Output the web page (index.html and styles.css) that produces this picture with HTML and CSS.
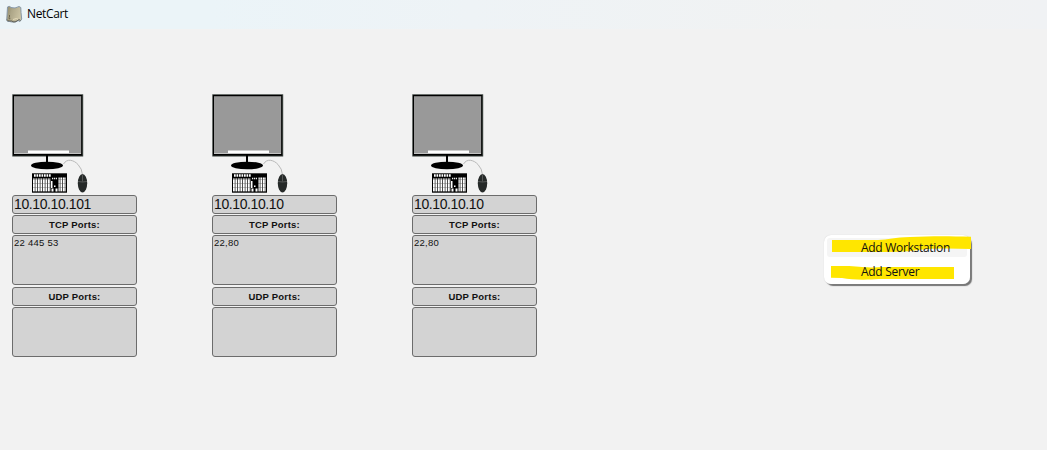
FILE: index.html
```html
<!DOCTYPE html>
<html lang="en">
<head>
<meta charset="utf-8">
<title>NetCart</title>
<link rel="stylesheet" href="styles.css">
</head>
<body>
<svg class="defs" width="0" height="0" aria-hidden="true">
  <defs>
    <linearGradient id="parchment" x1="0" x2="1" y1="0" y2=".3"><stop offset="0" stop-color="#8f896a"/><stop offset=".4" stop-color="#aea789"/><stop offset="1" stop-color="#cbc3a3"/></linearGradient>
    <pattern id="keys" x="33" y="180" width="2.5" height="4" patternUnits="userSpaceOnUse"><rect width="2.5" height="4" fill="#333"/><rect width="1.7" height="4" fill="#fff"/><rect y="3.3" width="1.7" height=".7" fill="#aaa"/></pattern>
    <symbol id="computer" viewBox="12 93 125 102">
      <rect x="12.3" y="94.3" width="70.9" height="62.2" fill="#333a36"/>
      <rect x="13" y="95" width="69" height="60.5" fill="#000"/>
      <rect x="14" y="96" width="67.2" height="58" fill="#777"/>
      <rect x="14" y="97" width="67" height="56" fill="#999"/>
      <rect x="14" y="153" width="67" height="1" fill="#c4c4c4"/>
      <rect x="28" y="150.5" width="41" height="2.5" fill="#fff"/>
      <rect x="46" y="155" width="2" height="9" fill="#000"/>
      <ellipse cx="47" cy="165.5" rx="16" ry="3.8" fill="#000"/>
      <path d="M63.5 164C67 158 74 160 78 164.5Q82 168.5 82.6 175" fill="none" stroke="#b9b9b9" stroke-width="1"/>
      <rect x="32" y="173.3" width="35" height="19.4" fill="#000"/>
      <path d="M34 175.5h17" stroke="#fff" stroke-width="2.3" stroke-dasharray="1.7 .8"/>
      <rect x="33" y="178.5" width="17.5" height="13" fill="url(#keys)"/>
      <rect x="58.5" y="177.5" width="7.5" height="14" fill="url(#keys)"/>
      <path d="M52 178.5h5" stroke="#eee" stroke-dasharray="1.2 .7" stroke-width="1.5"/>
      <path d="M51.5 188.5h2v3h-2zM55.5 188.500H57.500v3H55.500zM54 185.500h1.500v1.500H54zM51 181h1.500v7H51z" fill="#fff"/>
      <ellipse cx="82.5" cy="183.3" rx="4.7" ry="9.2" fill="#262a29"/>
      <path d="M78 181.5q4.5 1 9 0M82.5 174.5v7" fill="none" stroke="#777" stroke-width=".6"/>
    </symbol>
  </defs>
</svg>

<header class="titlebar">
  <svg class="app-icon" width="18" height="18" viewBox="5 4 18 18">
    <path d="M7.500 6q2-1.500 3.500 .5 4 1.500 8-1l1.800 1 .2 5 .7 6.500-1.700 2.500-2-1-2.500 1.500q-3 .5-6-.5-2 .5-2.800-1z" fill="url(#parchment)" stroke="#8798a8" stroke-width="1"/>
    <path d="M7 18.500q1 2 3 1.500t3 .8q2 .5 4-.8l2-1.500 1.500 1" fill="none" stroke="#5b5a50" stroke-width=".9"/>
    <path d="M8.500 17q2-1 1.200 1.300M9.500 14v2" fill="none" stroke="#666047" stroke-width=".9"/>
    <path d="M13 18.500l3.500-1 1.500.8" fill="none" stroke="#e5dbba"/>
  </svg>
  <h1 class="title">NetCart</h1>
</header>

<main class="network">
  <section class="node">
    <svg class="computer"><use href="#computer"/></svg>
    <div class="box address">10.10.10.101</div>
    <div class="box label">TCP Ports:</div>
    <div class="box ports">22 445 53</div>
    <div class="box label">UDP Ports:</div>
    <div class="box ports"></div>
  </section>
  <section class="node">
    <svg class="computer"><use href="#computer"/></svg>
    <div class="box address">10.10.10.10</div>
    <div class="box label">TCP Ports:</div>
    <div class="box ports">22,80</div>
    <div class="box label">UDP Ports:</div>
    <div class="box ports"></div>
  </section>
  <section class="node">
    <svg class="computer"><use href="#computer"/></svg>
    <div class="box address">10.10.10.10</div>
    <div class="box label">TCP Ports:</div>
    <div class="box ports">22,80</div>
    <div class="box label">UDP Ports:</div>
    <div class="box ports"></div>
  </section>
</main>

<nav class="menu">
  <svg class="highlight" width="150" height="54" viewBox="823 233 150 54">
    <path d="M832 240h46c10 0 17-3 32-3 20-1 38-1 61-.3V249c-18-.5-36-1-53 1-12 2-25 2-40 2H832z" fill="#ffe600"/>
    <path d="M831 266h18c14 1 22 2 34 1h71v12H879c-12 1-27 1-37-1l-11-.3z" fill="#ffe600"/>
  </svg>
  <div class="menu-item active"><span class="menu-text workstation">Add Workstation</span></div>
  <div class="menu-item"><span class="menu-text server">Add Server</span></div>
</nav>
</body>
</html>
```

FILE: styles.css
```css
* { box-sizing: border-box; }

body {
  margin: 0;
  width: 1047px;
  height: 450px;
  overflow: hidden;
  background: #f2f2f2;
  font-family: "Liberation Sans", Arial, sans-serif;
  color: #111;
}

.defs { position: absolute; }

.titlebar {
  display: flex;
  align-items: center;
  height: 29px;
  padding: 0 5px 2px;
  gap: 4px;
  background: linear-gradient(90deg, #ebf4f8 0%, #ebf4f8 20%, #eef3f6 45%, #f1f2f2 80%, #f0f2f4 100%);
}

.title {
  margin: 0;
  font: 400 12px/18px "Open Sans", "Noto Sans", sans-serif;
  letter-spacing: -0.35px;
  color: #000;
}

.network {
  display: flex;
  gap: 75px;
  padding: 64px 12px 0;
}

.node {
  display: flex;
  flex-direction: column;
  gap: 1px;
  width: 125px;
}

.computer {
  display: block;
  width: 125px;
  height: 102px;
  margin-bottom: -1px;
}

.box {
  height: 19px;
  border: 1px solid #6c6c6c;
  border-radius: 3px;
  background: #d3d3d3;
  white-space: nowrap;
}

.address {
  padding-left: 1px;
  font-size: 14px;
  line-height: 16px;
  letter-spacing: -0.4px;
}

.label {
  font-size: 9.5px;
  letter-spacing: 0.2px;
  font-weight: 700;
  line-height: 18px;
  text-align: center;
}

.ports {
  height: 50px;
  padding: 1px;
  font-size: 9.5px;
  letter-spacing: 0.25px;
  line-height: 11px;
}

.ports + .label { margin-top: 1px; }

/* Context menu floating over the canvas */
.menu {
  position: absolute;
  left: 824px;
  top: 235px;
  width: 146px;
  height: 49px;
  padding: 3px;
  border-radius: 7px;
  background: #fff;
  box-shadow: 0 0 1px #ccc, 2px 2px 1px #737373;
}

.highlight {
  position: absolute;
  left: -1px;
  top: -2px;
}

.menu-item {
  height: 24px;
  padding-left: 34px;
  font: 12px/20px "Open Sans", "Noto Sans", sans-serif;
  color: #111;
}

.menu-item.active {
  height: 19px;
  margin-bottom: 5px;
  border-radius: 3px;
  background: #f5f5f5;
}

.menu-text { position: relative; white-space: nowrap; }
.workstation { letter-spacing: -0.3px; }
.server { letter-spacing: -0.3px; }
```
